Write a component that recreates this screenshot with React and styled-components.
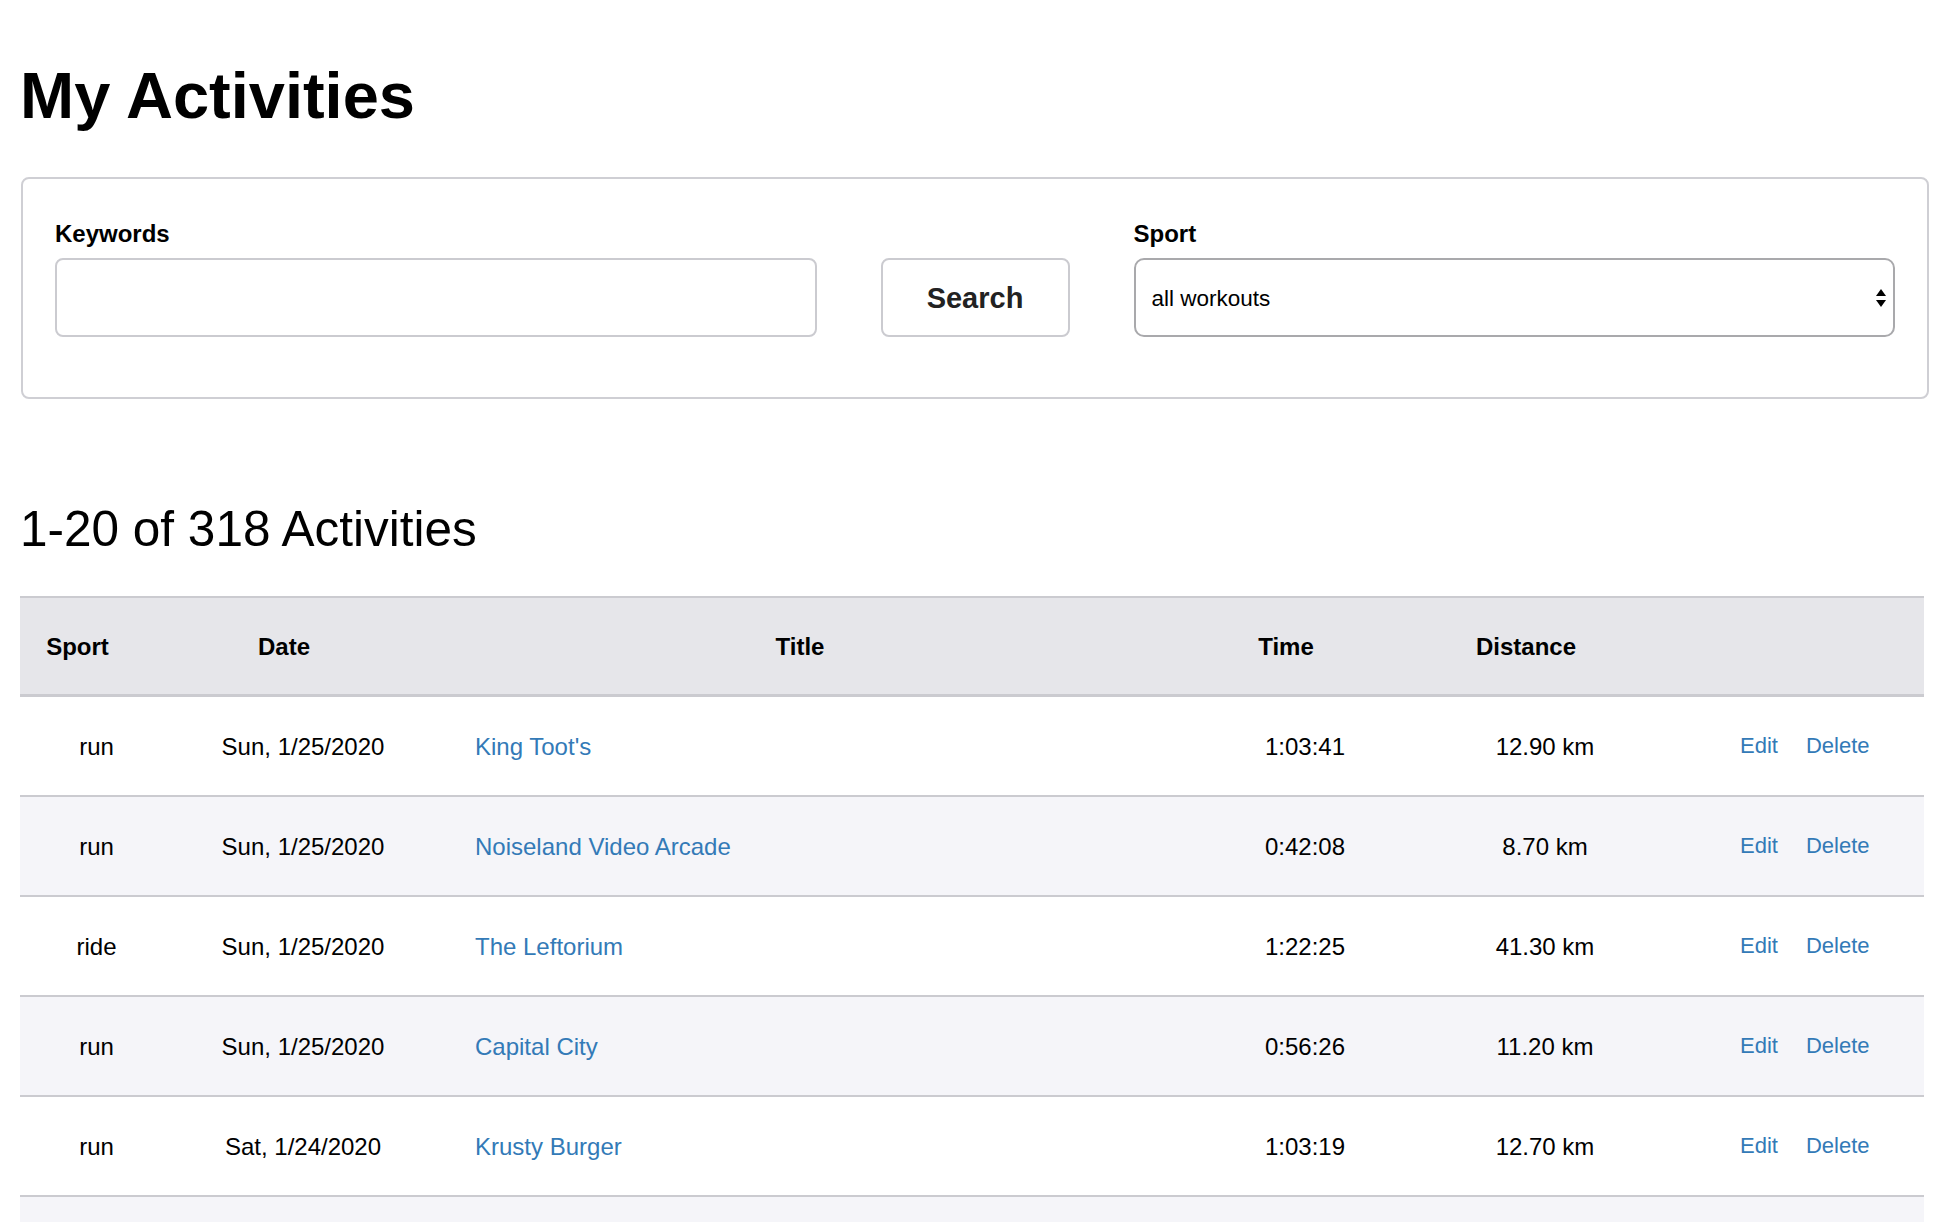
import React from "react";
import styled, { createGlobalStyle } from "styled-components";

const GlobalStyle = createGlobalStyle`
  html, body {
    margin: 0;
    padding: 0;
    background: #ffffff;
  }
  body {
    font-family: "Liberation Sans", Arial, sans-serif;
    color: #000;
  }
`;

const Page = styled.div`
  padding: 0 20px 40px 20px;
`;

const Heading = styled.h1`
  margin: 60px 0 45px 0;
  font-size: 65px;
  line-height: 72px;
  font-weight: 700;
`;

const FilterCard = styled.form`
  margin: 0 1px;
  border: 2px solid #cfcfd4;
  border-radius: 8px;
  padding: 41px 32px 60px 32px;
  display: grid;
  grid-template-columns: 1fr 189px 1fr;
  column-gap: 64px;
  align-items: end;
`;

const Field = styled.div`
  display: flex;
  flex-direction: column;
  gap: 10px;
`;

const Label = styled.label`
  font-size: 24px;
  line-height: 28px;
  font-weight: 700;
`;

const TextInput = styled.input`
  box-sizing: border-box;
  height: 79px;
  width: 100%;
  border: 2px solid #cbcbd0;
  border-radius: 8px;
  padding: 0 16px;
  font-family: inherit;
  font-size: 22px;
  outline: none;
`;

const SearchButton = styled.button`
  box-sizing: border-box;
  height: 79px;
  width: 100%;
  background: #fff;
  border: 2px solid #cbcbd0;
  border-radius: 8px;
  padding: 2px 0 0 0;
  font-family: inherit;
  font-size: 29px;
  font-weight: 700;
  color: #222;
  cursor: pointer;
`;

const SelectWrap = styled.div`
  position: relative;
`;

const Select = styled.select`
  box-sizing: border-box;
  appearance: none;
  -webkit-appearance: none;
  width: 100%;
  height: 79px;
  background: #fff;
  border: 2px solid #a9a9ac;
  border-radius: 10px;
  padding: 2px 40px 0 16px;
  font-family: inherit;
  font-size: 22.5px;
  color: #000;
  outline: none;
`;

const SelectArrows = styled.svg`
  position: absolute;
  right: 9px;
  top: 50%;
  transform: translateY(-50%);
  pointer-events: none;
`;

const Count = styled.h2`
  margin: 102px 0 39px 0;
  font-size: 49.5px;
  line-height: 56px;
  font-weight: 400;
`;

const Table = styled.table`
  width: calc(100% - 6px);
  table-layout: fixed;
  border-collapse: separate;
  border-spacing: 0;
  font-size: 24px;
`;

const HeadCell = styled.th`
  background: #e6e6ea;
  border-top: 2px solid #cbcbd0;
  border-bottom: 3px solid #cbcbd0;
  padding: 35px 38px 33px 0;
  line-height: 28px;
  font-weight: 700;
  text-align: center;
`;

const Row = styled.tr`
  background: ${(p) => (p.$alt ? "#f5f5f9" : "#ffffff")};
`;

const Cell = styled.td`
  border-bottom: 2px solid #cbcbd0;
  padding: 36px 0 34px ${(p) => p.$padLeft || 0}px;
  height: 28px;
  line-height: 28px;
  text-align: ${(p) => p.$align || "center"};
  vertical-align: middle;
  white-space: nowrap;
`;

const TitleLink = styled.a`
  color: #337ab7;
  text-decoration: none;
  font-size: 24px;
`;

const Actions = styled.span`
  display: inline-flex;
  vertical-align: top;
  gap: 28px;
  font-size: 22px;
  line-height: 26px;
`;

const ActionLink = styled.a`
  color: #337ab7;
  text-decoration: none;
`;

const activities = [
  { sport: "run", date: "Sun, 1/25/2020", title: "King Toot's", time: "1:03:41", distance: "12.90 km" },
  { sport: "run", date: "Sun, 1/25/2020", title: "Noiseland Video Arcade", time: "0:42:08", distance: "8.70 km" },
  { sport: "ride", date: "Sun, 1/25/2020", title: "The Leftorium", time: "1:22:25", distance: "41.30 km" },
  { sport: "run", date: "Sun, 1/25/2020", title: "Capital City", time: "0:56:26", distance: "11.20 km" },
  { sport: "run", date: "Sat, 1/24/2020", title: "Krusty Burger", time: "1:03:19", distance: "12.70 km" },
  { sport: "run", date: "Sat, 1/24/2020", title: "Moe's Tavern", time: "0:48:12", distance: "9.60 km" },
  { sport: "ride", date: "Fri, 1/23/2020", title: "Springfield Gorge", time: "1:45:02", distance: "52.10 km" },
];

const columns = [153, 260, 772, 200, 280, 239];

export default function App() {
  return (
    <Page>
      <GlobalStyle />
      <Heading>My Activities</Heading>
      <FilterCard onSubmit={(e) => e.preventDefault()}>
        <Field>
          <Label htmlFor="keywords">Keywords</Label>
          <TextInput id="keywords" type="text" />
        </Field>
        <SearchButton type="submit">Search</SearchButton>
        <Field>
          <Label htmlFor="sport">Sport</Label>
          <SelectWrap>
            <Select id="sport" defaultValue="all">
              <option value="all">all workouts</option>
              <option value="run">run</option>
              <option value="ride">ride</option>
            </Select>
            <SelectArrows width="10" height="18" viewBox="0 0 10 18">
              <polygon points="5,0 10,7 0,7" fill="#000" />
              <polygon points="0,11 10,11 5,18" fill="#000" />
            </SelectArrows>
          </SelectWrap>
        </Field>
      </FilterCard>

      <Count>1-20 of 318 Activities</Count>

      <Table>
        <colgroup>
          {columns.map((w, i) => (
            <col key={i} style={{ width: w }} />
          ))}
        </colgroup>
        <thead>
          <tr>
            <HeadCell>Sport</HeadCell>
            <HeadCell>Date</HeadCell>
            <HeadCell>Title</HeadCell>
            <HeadCell>Time</HeadCell>
            <HeadCell>Distance</HeadCell>
            <HeadCell />
          </tr>
        </thead>
        <tbody>
          {activities.map((a, i) => (
            <Row key={i} $alt={i % 2 === 1}>
              <Cell>{a.sport}</Cell>
              <Cell>{a.date}</Cell>
              <Cell $align="left" $padLeft={42}>
                <TitleLink href="#">{a.title}</TitleLink>
              </Cell>
              <Cell>{a.time}</Cell>
              <Cell>{a.distance}</Cell>
              <Cell $align="left" $padLeft={55}>
                <Actions>
                  <ActionLink href="#">Edit</ActionLink>
                  <ActionLink href="#">Delete</ActionLink>
                </Actions>
              </Cell>
            </Row>
          ))}
        </tbody>
      </Table>
    </Page>
  );
}
